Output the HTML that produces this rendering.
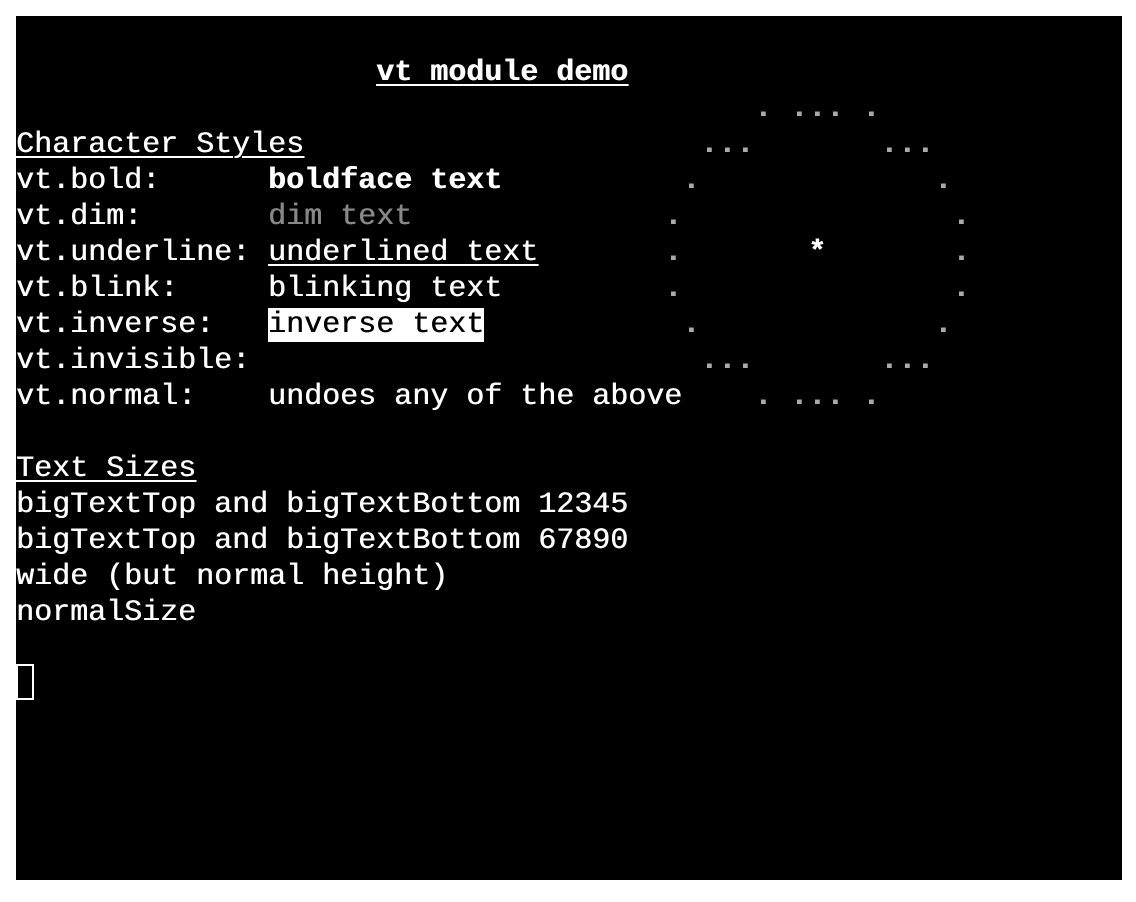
<!DOCTYPE html>
<html><head><meta charset="utf-8"><style>
html,body{margin:0;padding:0;background:#fff;width:1136px;height:902px;overflow:hidden}
#t{position:absolute;left:16px;top:16px;width:1106px;height:864px;background:#000}
pre{position:absolute;left:16px;top:19px;margin:0;font-family:"Liberation Mono",monospace;font-size:30px;line-height:36px;color:#fff;white-space:pre;text-shadow:0.5px 0 0 currentColor}
.u{text-decoration:underline;text-underline-offset:4px;text-decoration-thickness:2px}
.b{font-weight:bold}
.d{color:#888}
.g{color:#aaa;font-weight:bold}
.i{background:#fff;color:#000}
#cur{position:absolute;left:16px;top:664px;width:14px;height:32px;border:2px solid #fff}
</style></head><body><div id="t"></div><pre>

                    <span class="u b">vt module demo</span>
                                         <span class="g">. ... .</span>
<span class="u">Character Styles</span>                      <span class="g">...       ...</span>
vt.bold:      <span class="b">boldface text</span>          <span class="g">.             .</span>
vt.dim:       <span class="d">dim text</span>              <span class="g">.               .</span>
vt.underline: <span class="u">underlined text</span>       <span class="g">.       </span><span class="b">*</span><span class="g">       .</span>
vt.blink:     blinking text         <span class="g">.               .</span>
vt.inverse:   <span class="i">inverse text</span>           <span class="g">.             .</span>
vt.invisible:                         <span class="g">...       ...</span>
vt.normal:    undoes any of the above    <span class="g">. ... .</span>

<span class="u">Text Sizes</span>
bigTextTop and bigTextBottom 12345
bigTextTop and bigTextBottom 67890
wide (but normal height)
normalSize
</pre><div id="cur"></div></body></html>
